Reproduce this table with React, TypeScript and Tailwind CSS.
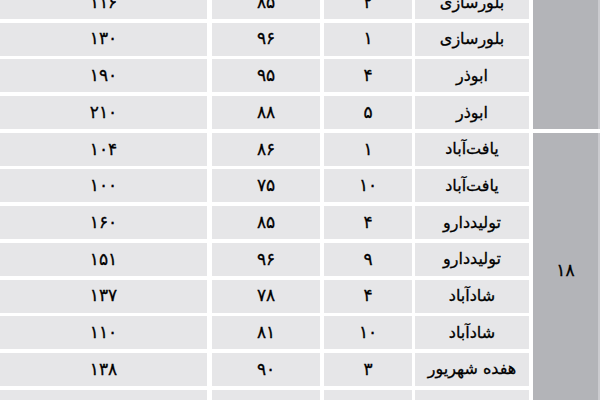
import React from "react";

type Row = [string, string, string, string];

const section1: Row[] = [
  ["۱۱۶", "۸۵", "۲", "بلورسازی"],
  ["۱۳۰", "۹۶", "۱", "بلورسازی"],
  ["۱۹۰", "۹۵", "۴", "ابوذر"],
  ["۲۱۰", "۸۸", "۵", "ابوذر"],
];

const section2: Row[] = [
  ["۱۰۴", "۸۶", "۱", "یافت‌آباد"],
  ["۱۰۰", "۷۵", "۱۰", "یافت‌آباد"],
  ["۱۶۰", "۸۵", "۴", "تولیددارو"],
  ["۱۵۱", "۹۶", "۹", "تولیددارو"],
  ["۱۳۷", "۷۸", "۴", "شادآباد"],
  ["۱۱۰", "۸۱", "۱۰", "شادآباد"],
  ["۱۳۸", "۹۰", "۳", "هفده شهریور"],
  ["", "", "", ""],
];

function Cell({ w, size, children }: { w: string; size: string; children?: React.ReactNode }) {
  return (
    <div
      className={`${w} ${size} h-[33px] bg-[#e6e6e8] flex items-center justify-center text-black`}
      dir="rtl"
    >
      {children}
    </div>
  );
}

function DataRow({ r }: { r: Row }) {
  return (
    <div className="flex flex-row">
      <Cell w="w-[207px]" size="text-[17px]">{r[0]}</Cell>
      <div className="w-[5px]" />
      <Cell w="w-[108px]" size="text-[17px]">{r[1]}</Cell>
      <div className="w-[4px]" />
      <Cell w="w-[88px]" size="text-[17px]">{r[2]}</Cell>
      <div className="w-[3px]" />
      <Cell w="w-[114px]" size="text-[16px]">{r[3]}</Cell>
    </div>
  );
}

function Section({ rows, label }: { rows: Row[]; label?: string }) {
  return (
    <div className="flex flex-row">
      <div className="flex flex-col gap-y-[3.7px]">
        {rows.map((r, i) => (
          <DataRow key={i} r={r} />
        ))}
      </div>
      <div className="w-[4px]" />
      <div className="w-[65px] bg-[#b3b4b8] flex items-center justify-center pb-[14px] text-[17px] text-black">
        {label}
      </div>
      <div className="w-[2px] bg-[#cbcbcf]" />
    </div>
  );
}

export default function App() {
  return (
    <div
      className="w-[600px] h-[400px] overflow-hidden bg-white"
      style={{ fontFamily: '"DejaVu Sans", sans-serif', WebkitTextStroke: "0.3px black" }}
    >
      <div className="flex flex-col gap-y-[3.7px] mt-[-14px]">
        <Section rows={section1} />
        <Section rows={section2} label="۱۸" />
      </div>
    </div>
  );
}
